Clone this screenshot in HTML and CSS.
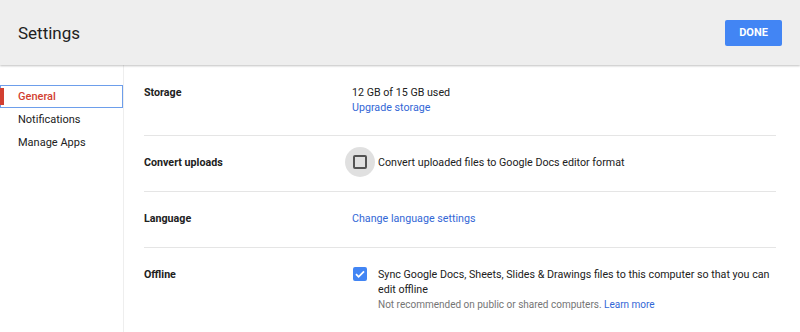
FILE: index.html
```html
<!DOCTYPE html>
<html lang="en">

<head>
    <meta charset="UTF-8">
    <meta name="viewport" content="width=device-width, initial-scale=1.0">
    <title>Settings</title>
    <link rel="stylesheet" href="styles.css">
</head>

<body>
    <header class="topbar">
        <h1>Settings</h1>
        <button class="done-btn">DONE</button>
    </header>

    <div class="container">
        <nav class="sidebar">
            <a href="#" class="nav-item active">General</a>
            <a href="#" class="nav-item">Notifications</a>
            <a href="#" class="nav-item">Manage Apps</a>
        </nav>

        <!-- Settings rows -->
        <main class="main-content">
            <div class="row">
                <div class="label">Storage</div>
                <div class="value">
                    <div>12 GB of 15 GB used</div>
                    <a href="#" class="link">Upgrade storage</a>
                </div>
            </div>

            <div class="row">
                <div class="label">Convert uploads</div>
                <div class="value check-line">
                    <span class="checkbox focused"></span>
                    <span>Convert uploaded files to Google Docs editor format</span>
                </div>
            </div>

            <div class="row">
                <div class="label">Language</div>
                <div class="value">
                    <a href="#" class="link">Change language settings</a>
                </div>
            </div>

            <div class="row">
                <div class="label">Offline</div>
                <div class="value check-line">
                    <span class="checkbox checked">
                        <svg viewBox="0 0 14 14" width="14" height="14"><path d="M3 7.2l2.6 2.6L11 4.4" fill="none" stroke="#fff" stroke-width="1.8"/></svg>
                    </span>
                    <div>
                        <div>Sync Google Docs, Sheets, Slides &amp; Drawings files to this computer so that you can edit offline</div>
                        <div class="hint">Not recommended on public or shared computers. <a href="#" class="link">Learn more</a></div>
                    </div>
                </div>
            </div>
        </main>
    </div>
</body>

</html>
```

FILE: styles.css
```css
:root {
    --text-color: #212121;
    --muted-color: #757575;
    --link-color: #3367d6;
    --blue: #4285f4;
    --line-color: #e5e5e5;
}

body {
    font-family: Roboto, 'Liberation Sans', sans-serif;
    font-size: 10.7px;
    color: var(--text-color);
    margin: 0;
    padding: 0;
    background: #ffffff;
}

.topbar {
    height: 65px;
    background-color: #eeeeee;
    display: flex;
    justify-content: space-between;
    align-items: center;
    padding: 0 18px;
    box-shadow: 0 1px 2px rgba(0, 0, 0, 0.25);
    position: relative;
    z-index: 1;
}

.topbar h1 {
    margin: 0;
    font-size: 17px;
    font-weight: 400;
    color: #212121;
}

.done-btn {
    background-color: var(--blue);
    border: none;
    color: white;
    width: 57px;
    height: 26px;
    font-family: inherit;
    font-size: 11px;
    font-weight: 700;
    border-radius: 2px;
    cursor: pointer;
}

.container {
    display: flex;
    min-height: calc(100vh - 65px);
}

.sidebar {
    width: 123px;
    flex-shrink: 0;
    padding-top: 20px;
    border-right: 1px solid #eeeeee;
    display: flex;
    flex-direction: column;
    font-size: 11px;
}

.nav-item {
    height: 23px;
    line-height: 23px;
    padding-left: 18px;
    color: var(--text-color);
    text-decoration: none;
    box-sizing: border-box;
}

.nav-item.active {
    color: #d23f31;
    font-weight: 500;
    border: 1px solid #6d9eeb;
    line-height: 21px;
    padding-left: 17px;
    position: relative;
}

.nav-item.active::before {
    content: "";
    position: absolute;
    left: -1px;
    top: 2px;
    bottom: 2px;
    width: 4px;
    background: #d23f31;
}

.main-content {
    flex-grow: 1;
    padding: 0 24px 0 20px;
}

.row {
    display: flex;
    padding: 19px 0 21px;
    line-height: 15px;
    border-bottom: 1px solid var(--line-color);
}

.row:first-child {
    padding-top: 20px;
    padding-bottom: 20px;
}

.row:last-child {
    border-bottom: none;
}

.label {
    width: 208px;
    flex-shrink: 0;
    font-weight: 700;
}

.value {
    flex-grow: 1;
}

.link {
    color: var(--link-color);
    text-decoration: none;
}

.check-line {
    display: flex;
    align-items: flex-start;
    gap: 11px;
}

.checkbox {
    width: 14px;
    height: 14px;
    box-sizing: border-box;
    border: 2px solid #5f5f5f;
    border-radius: 2px;
    flex-shrink: 0;
    margin-left: 1px;
    position: relative;
}

.checkbox.focused::before {
    content: "";
    position: absolute;
    left: -10px;
    top: -10px;
    width: 30px;
    height: 30px;
    border-radius: 50%;
    background: rgba(0, 0, 0, 0.12);
}

.checkbox.checked {
    background: var(--blue);
    border-color: var(--blue);
}

.checkbox.checked svg {
    position: absolute;
    left: -2px;
    top: -2px;
}

.hint {
    color: var(--muted-color);
    font-size: 10px;
}
```
